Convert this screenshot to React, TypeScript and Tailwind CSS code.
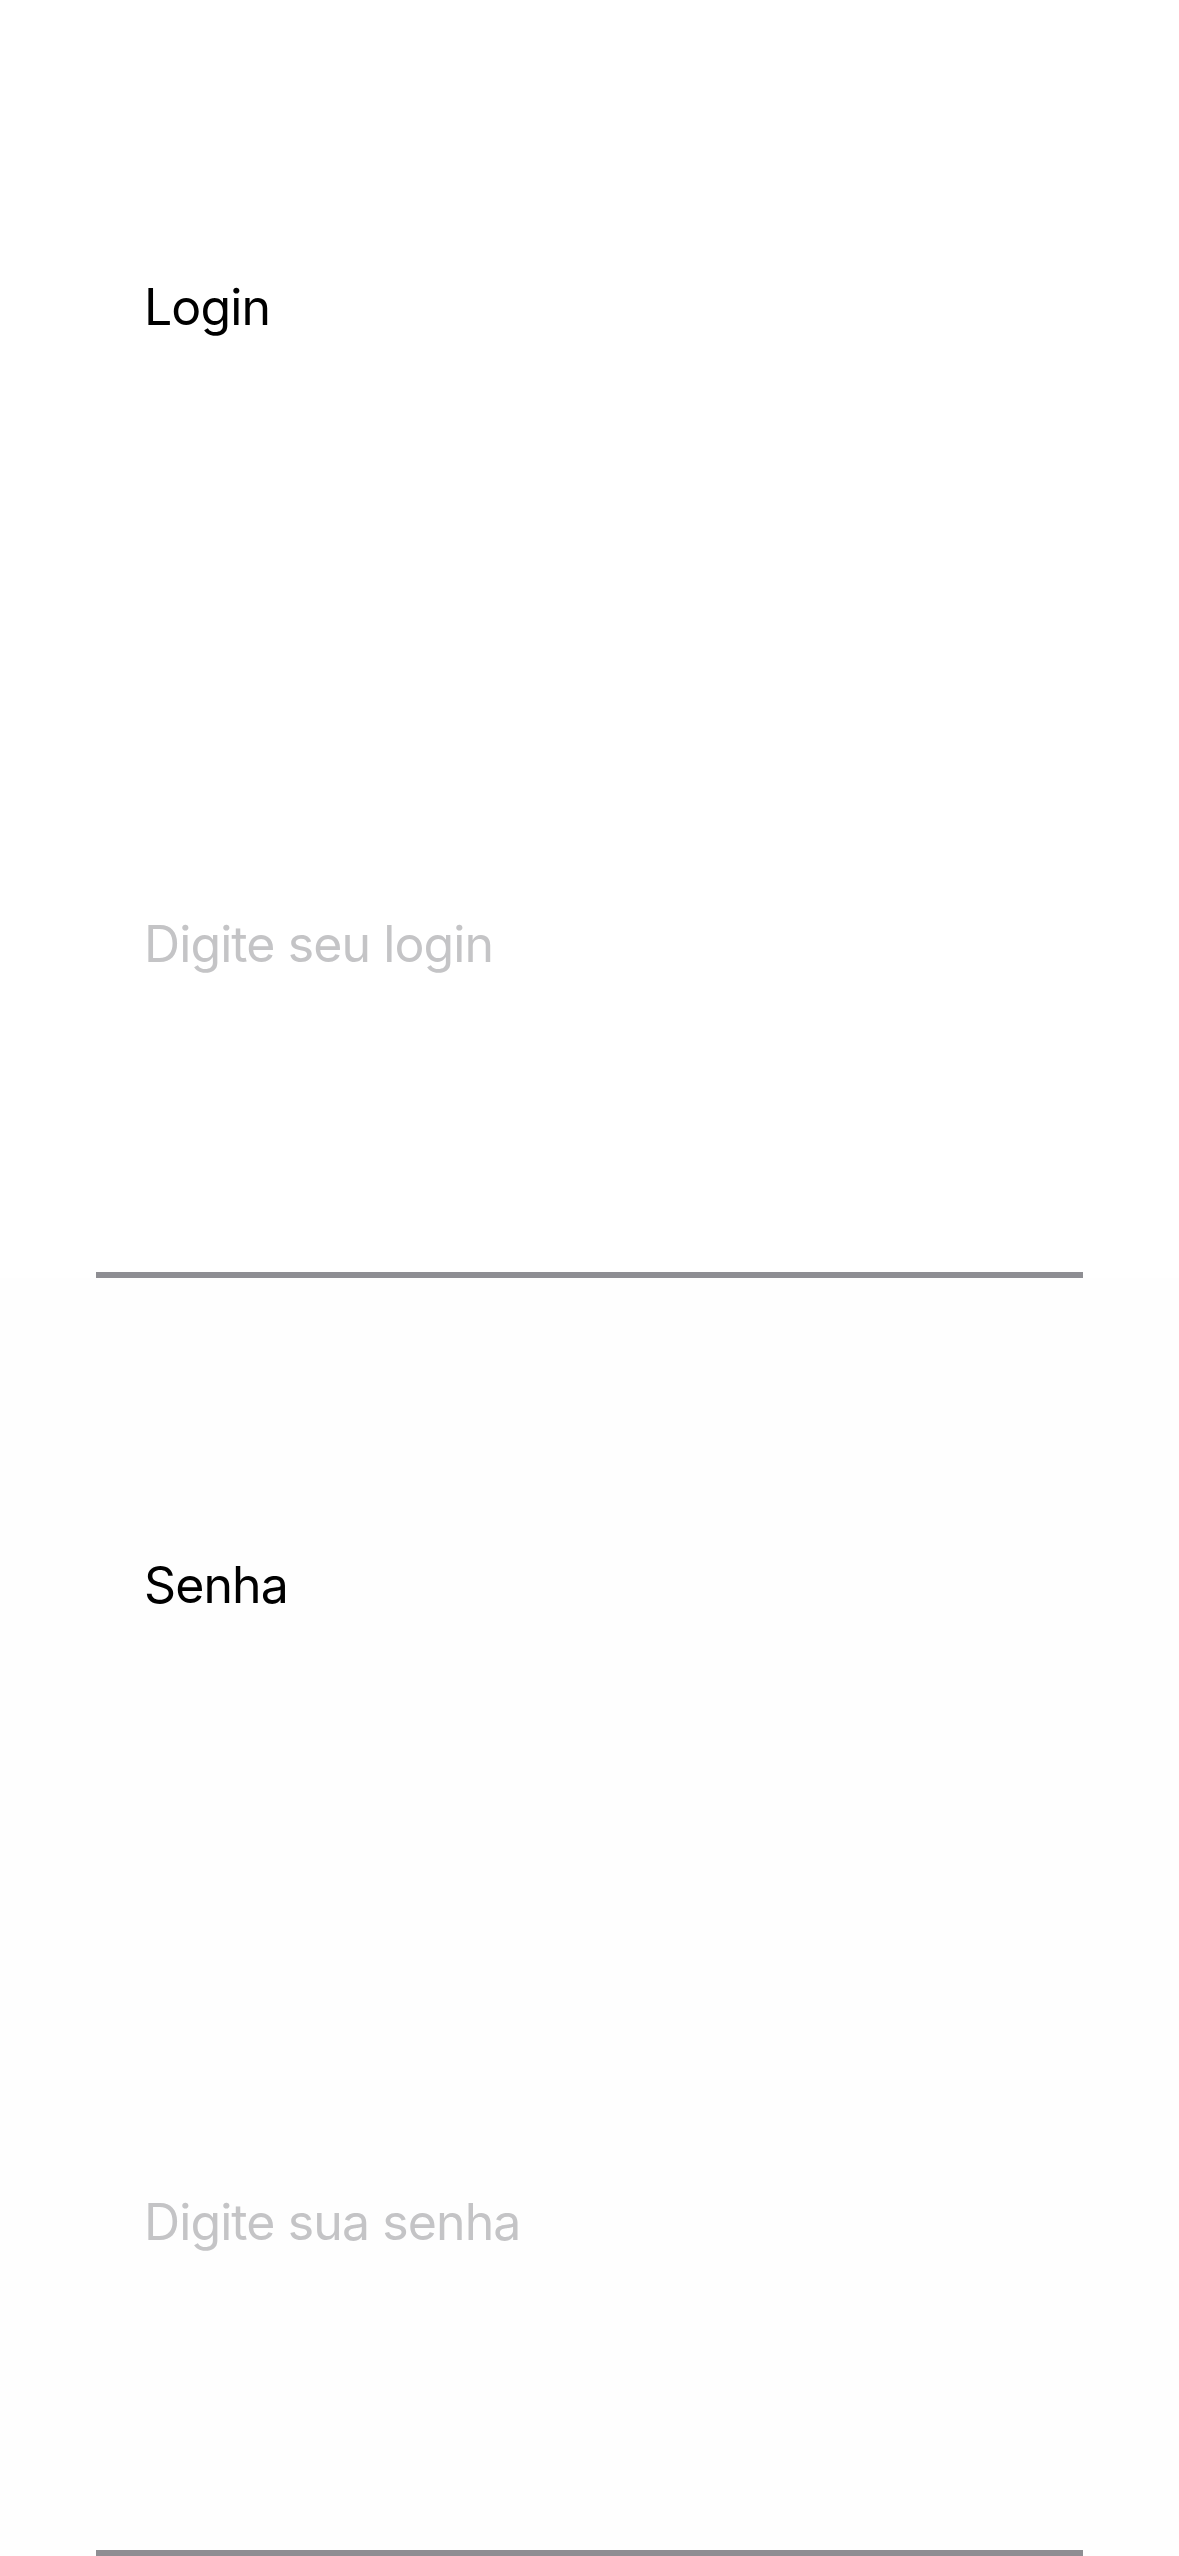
import React, { useState } from 'react';

interface FieldProps {
  label: string;
  placeholder: string;
  type?: string;
  value: string;
  onChange: (value: string) => void;
  className?: string;
}

const Field: React.FC<FieldProps> = ({ label, placeholder, type = 'text', value, onChange, className = '' }) => {
  return (
    <div className={`h-[1278px] ${className}`}>
      <div className="h-full mx-[96px] border-b-[6px] border-[#8e8e93] flex flex-col px-[48px] pt-[277px]">
        <label className="text-[50px] leading-[60px] tracking-[-0.9px] text-black">{label}</label>
        <input
          type={type}
          value={value}
          placeholder={placeholder}
          onChange={(e) => onChange(e.target.value)}
          className="mt-[577px] h-[60px] w-full bg-transparent text-[50px] leading-[60px] tracking-[-0.9px] text-black placeholder:text-[#c4c4c6] outline-none"
        />
      </div>
    </div>
  );
};

export default function App() {
  const [login, setLogin] = useState('');
  const [senha, setSenha] = useState('');

  return (
    <div className="w-[1179px] h-[2556px] overflow-hidden bg-white font-['Inter','Liberation_Sans',sans-serif]">
      <Field label="Login" placeholder="Digite seu login" value={login} onChange={setLogin} className="bg-white" />
      <Field label="Senha" placeholder="Digite sua senha" type="password" value={senha} onChange={setSenha} className="bg-[#fefefe]" />
    </div>
  );
}
